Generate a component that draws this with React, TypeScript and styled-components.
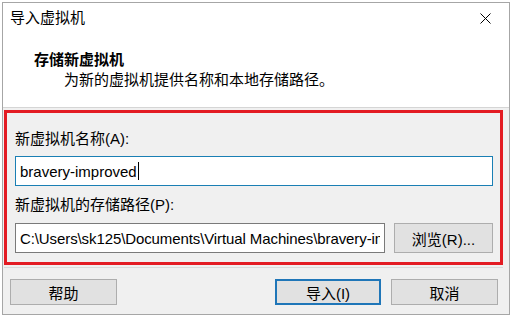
import React from "react";
import styled, { createGlobalStyle } from "styled-components";

const GlobalStyle = createGlobalStyle`
  html, body {
    margin: 0;
    padding: 0;
    background: #ffffff;
  }
  body {
    font-family: "Liberation Sans", "Noto Sans CJK SC", sans-serif;
    font-size: 15px;
    color: #000;
  }
`;

const App = () => {
  return (
    <>
      <GlobalStyle />
      <Window>
        <TitleBar>
          <span className="title">导入虚拟机</span>
          <CloseButton>
            <svg width="11" height="11" viewBox="0 0 11 11">
              <path d="M0.5 0.5 L10.5 10.5 M10.5 0.5 L0.5 10.5" stroke="#000" strokeWidth="1" />
            </svg>
          </CloseButton>
        </TitleBar>
        <Header>
          <p className="heading">存储新虚拟机</p>
          <p className="sub">为新的虚拟机提供名称和本地存储路径。</p>
        </Header>
        <Body>
          <Highlight>
            <Label>新虚拟机名称(A):</Label>
            <TextBox focused>
              <span className="value">bravery-improved</span>
              <Caret />
            </TextBox>
            <Label className="second">新虚拟机的存储路径(P):</Label>
            <PathRow>
              <TextBox>
                <span className="value clip">
                  C:\Users\sk125\Documents\Virtual Machines\bravery-improved
                </span>
              </TextBox>
              <Button width={99} height={30}>
                浏览(R)...
              </Button>
            </PathRow>
          </Highlight>
          <Footer>
            <Button width={107}>帮助</Button>
            <div className="right">
              <Button width={106} primary>
                导入(I)
              </Button>
              <Button width={107}>取消</Button>
            </div>
          </Footer>
        </Body>
      </Window>
    </>
  );
};

const Window = styled.div`
  margin: 2px 0 0 2px;
  width: 508px;
  height: 313px;
  box-sizing: border-box;
  border: 1px solid #a6a6a6;
  background: #f0f0f0;
  display: flex;
  flex-direction: column;
`;

const TitleBar = styled.div`
  height: 30px;
  flex-shrink: 0;
  background: #fff;
  display: flex;
  align-items: center;
  justify-content: space-between;
  padding-left: 7px;
  > .title {
    line-height: 20px;
  }
`;

const CloseButton = styled.div`
  width: 46px;
  height: 30px;
  display: flex;
  align-items: center;
  justify-content: center;
  margin-right: 1px;
`;

const Header = styled.div`
  height: 75px;
  flex-shrink: 0;
  background: #fff;
  border-bottom: 1px solid #d5d5d5;
  box-sizing: border-box;
  padding: 17px 0 0 31px;
  > p {
    margin: 0;
    line-height: 20px;
  }
  > .heading {
    font-weight: bold;
  }
  > .sub {
    padding-left: 30px;
  }
`;

const Body = styled.div`
  flex: 1;
  display: flex;
  flex-direction: column;
  padding: 2px 6px 0 1px;
`;

const Highlight = styled.div`
  border: 3px solid #e31b23;
  padding: 16px 7px 9px 8px;
  display: flex;
  flex-direction: column;
  > .second {
    margin-top: 9px;
  }
`;

const Label = styled.div`
  line-height: 20px;
  height: 20px;
  margin-bottom: 7px;
  white-space: nowrap;
`;

const TextBox = styled.div<{ focused?: boolean }>`
  height: 30px;
  flex-shrink: 0;
  box-sizing: border-box;
  background: #fff;
  border: 1px solid ${(props) => (props.focused ? "#1a7fb4" : "#7a7a7a")};
  padding: 0 4px;
  display: flex;
  align-items: center;
  min-width: 0;
  > .value {
    white-space: nowrap;
  }
  > .clip {
    display: block;
    flex: 1;
    min-width: 0;
    overflow: hidden;
    letter-spacing: -0.1px;
  }
`;

const Caret = styled.span`
  display: inline-block;
  width: 1px;
  height: 18px;
  background: #000;
  margin-left: 1px;
`;

const PathRow = styled.div`
  display: flex;
  gap: 9px;
  margin-top: 1px;
  > :first-child {
    flex: 1;
  }
`;

const Button = styled.div<{ width: number; height?: number; primary?: boolean }>`
  width: ${(props) => props.width}px;
  height: ${(props) => props.height || 26}px;
  box-sizing: border-box;
  flex-shrink: 0;
  background: #e1e1e1;
  border: ${(props) => (props.primary ? "2px solid #1f76b8" : "1px solid #adadad")};
  display: flex;
  align-items: center;
  justify-content: center;
  white-space: nowrap;
`;

const Footer = styled.div`
  border-top: 1px solid #dadada;
  margin-top: 2px;
  padding: 11px 0 0 6px;
  display: flex;
  justify-content: space-between;
  > .right {
    display: flex;
    gap: 10px;
    margin-right: 5px;
  }
`;

export default App;
